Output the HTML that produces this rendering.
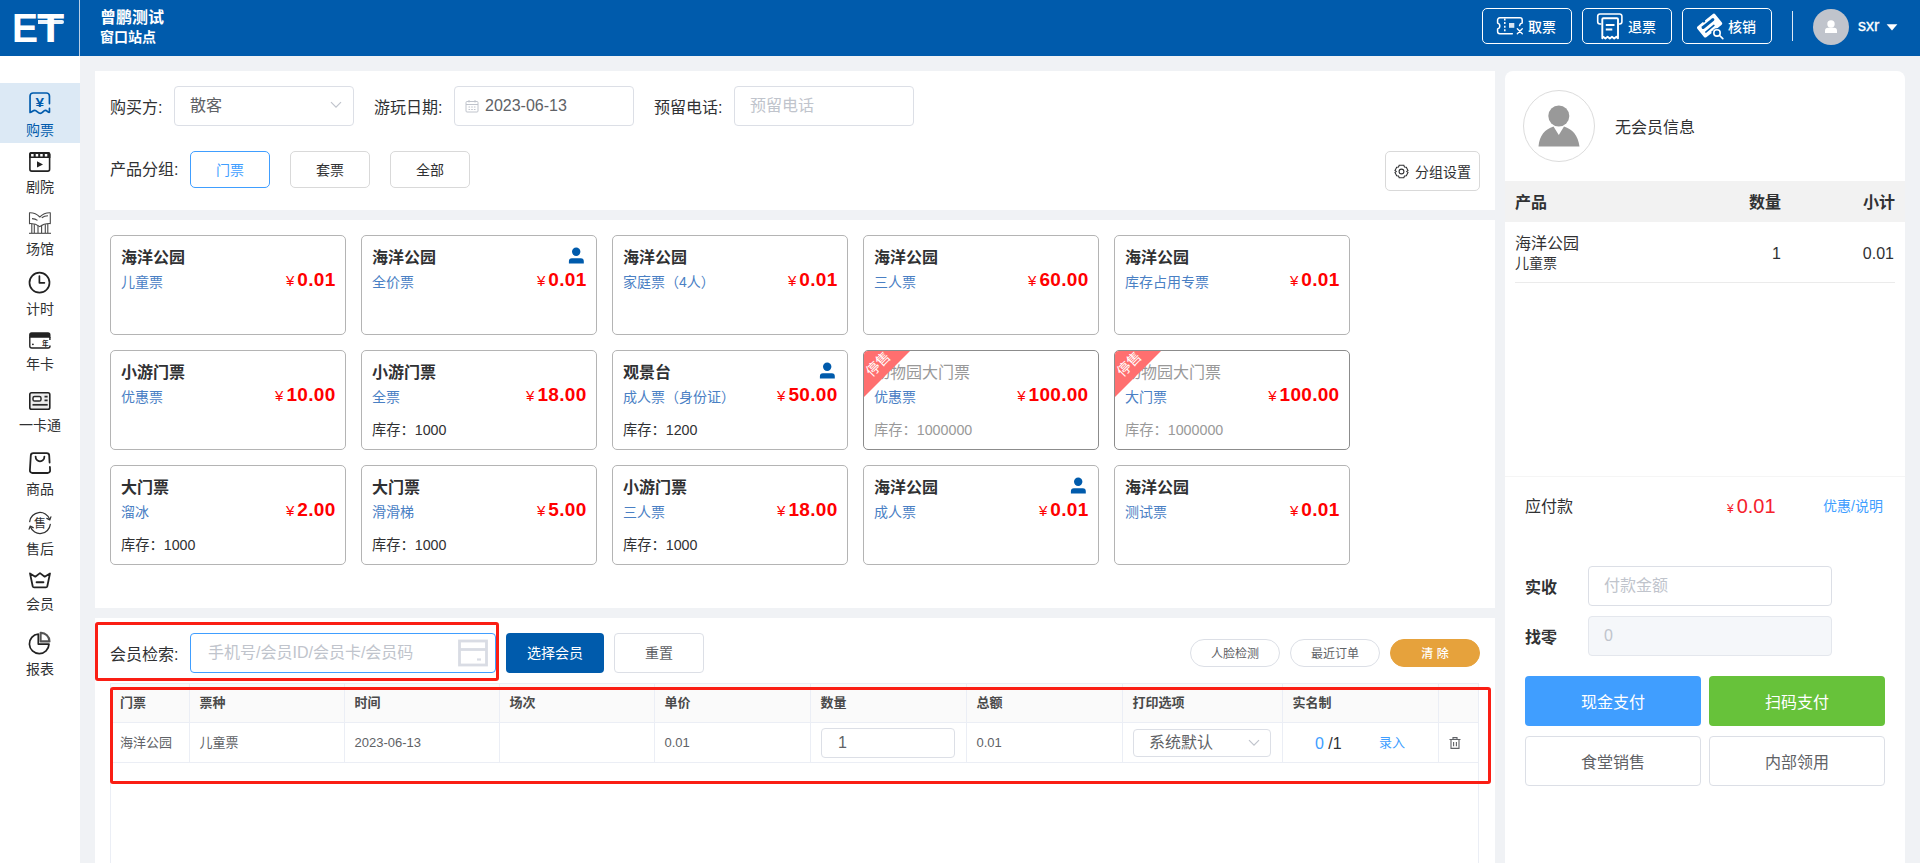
<!DOCTYPE html>
<html lang="zh-CN">
<head>
<meta charset="utf-8">
<title>购票</title>
<style>
*{box-sizing:border-box;margin:0;padding:0}
html,body{width:1920px;height:863px;overflow:hidden}
body{background:#f0f2f5;font-family:"Liberation Sans","Noto Sans CJK SC",sans-serif;color:#303133;position:relative;font-size:14px}
.abs{position:absolute}
.t{position:absolute;white-space:nowrap;line-height:20px}
/* header */
#hdr{position:absolute;left:0;top:0;width:1920px;height:56px;background:#005bac}
#hdr .vline{position:absolute;left:79px;top:0;width:1px;height:56px;background:#b9cfe6}
.hbtn{position:absolute;top:8px;width:90px;height:36px;border:1px solid #fff;border-radius:5px;color:#fff}
.hbtn span{position:absolute;left:45px;top:8px;font-size:14px;line-height:20px;font-weight:500}
/* sidebar */
#side{position:absolute;left:0;top:56px;width:80px;height:807px;background:#fff}
.sitem{position:absolute;left:0;width:80px;text-align:center;font-size:14px;line-height:18px;color:#303133}
/* panels */
.panel{position:absolute;background:#fff}
.inp{position:absolute;height:40px;border:1px solid #dcdfe6;border-radius:4px;background:#fff}
.gbtn{position:absolute;top:151px;width:80px;height:37px;border:1px solid #d9d9d9;border-radius:5px;background:#fff;text-align:center;font-size:14px;line-height:37px;color:#303133}
/* cards */
.card{position:absolute;width:236px;height:100px;border:1px solid #b4b4b4;border-radius:5px;background:#fff;overflow:hidden}
.card .n{position:absolute;left:10px;top:11px;font-size:16px;line-height:22px;font-weight:700;color:#303133;white-space:nowrap}
.card .s{position:absolute;left:10px;top:36px;font-size:14px;line-height:20px;color:#4a80c4;white-space:nowrap}
.card .p{position:absolute;right:9.500px;top:31px;line-height:26px;color:#ff0000;white-space:nowrap;font-size:19px;font-weight:700;letter-spacing:0.300px}
.card .p i{font-style:normal;font-weight:400;font-size:15px;margin-right:3px;letter-spacing:0}
.card .k{position:absolute;left:10px;top:69px;font-size:14.250px;line-height:20px;color:#303133;white-space:nowrap}
.card .u{position:absolute;right:11px;top:10px;width:18px;height:18px}
.card.off .n,.card.off .k{color:#999}.card.off .n{font-weight:400}
.card.off{border-color:#8c8c8c}
.tri{position:absolute;left:0;top:0;width:0;height:0;border-top:46px solid #ff6f6f;border-right:46px solid transparent}
.ts{position:absolute;left:-8px;top:5px;width:44px;text-align:center;font-size:14px;line-height:16px;color:#fff;transform:rotate(-45deg);white-space:nowrap}
.pill{top:639px;width:90px;height:28px;border:1px solid #dcdfe6;border-radius:14px;background:#fff;color:#606266;text-align:center;font-size:12px;line-height:28px}
.th{font-size:13px;line-height:20px;font-weight:700;color:#4a4a4a}
.td{font-size:13px;line-height:20px;color:#606266}
.pay{width:176px;height:50px;border-radius:4px;text-align:center;font-size:16px;line-height:54px}
</style>
</head>
<body>
<!-- HEADER -->
<div id="hdr">
  <div class="vline"></div>
  <div class="t" style="left:100px;top:7px;font-size:16px;line-height:22px;font-weight:700;color:#fff">曾鹏测试</div>
  <div class="t" style="left:100px;top:27px;font-size:14px;line-height:20px;font-weight:700;color:#fff">窗口站点</div>
  <div class="hbtn" style="left:1482px"><span>取票</span></div>
  <div class="hbtn" style="left:1582px"><span>退票</span></div>
  <div class="hbtn" style="left:1682px"><span>核销</span></div>
  <div class="abs" style="left:1792px;top:11px;width:1px;height:30px;background:#dfe9f4"></div>
  <div class="abs" style="left:1813px;top:9px;width:36px;height:36px;border-radius:50%;background:#c0c4cc"></div>
  <div class="t" style="left:1858px;top:15px;font-size:16px;line-height:22px;color:#fff;font-weight:400;-webkit-text-stroke:0.3px #fff">sxr</div>
</div>
<div class="t" style="left:12.100px;top:5px;font-size:39.800px;line-height:46px;font-weight:700;color:#fff;transform:scaleX(0.980);transform-origin:0 0">E</div>
<div class="t" style="left:37.400px;top:5px;font-size:39.800px;line-height:46px;font-weight:700;color:#fff;transform:scaleX(1.120);transform-origin:0 0">T</div>
<svg class="abs" style="left:1496px;top:16px" width="28" height="20" viewBox="0 0 28 20"><g fill="none" stroke="#fff" stroke-width="1.500" stroke-linecap="round" stroke-linejoin="round"><path d="M16.300 17.800H3.800a2.200 2.200 0 0 1-2.200-2.200V12.900a3 3 0 0 0 0-5.800V4a2.200 2.200 0 0 1 2.200-2.200H24a2.200 2.200 0 0 1 2.200 2.200V7.100a3 3 0 0 0-2.600 2.400"/><path d="M8.800 2.500V17.500" stroke-dasharray="2 1.600" stroke-linecap="butt"/><path d="M21.300 12.800L26.300 17.800M26.300 12.800L21.300 17.800" stroke-width="1.300"/></g><rect x="13" y="7" width="5.300" height="4.800" fill="#fff" opacity="0.850"/></svg>
<svg class="abs" style="left:1596px;top:12px" width="28" height="28" viewBox="0 0 28 28"><g fill="none" stroke="#fff" stroke-linejoin="round"><path d="M5.400 12H3.900a2.200 2.200 0 0 1-2.200-2.200V4.200a2.200 2.200 0 0 1 2.200-2.200H23.700a2.200 2.200 0 0 1 2.200 2.200V9.800a2.200 2.200 0 0 1-2.200 2.200H23" stroke-width="1.600"/><path d="M6.300 26.300V7.300a1 1 0 0 1 1-1H21a1 1 0 0 1 1 1V26.300l-1.600-1.500-2.200 1.700-2.200-1.700-2.200 1.700-2.200-1.700-2.200 1.700-2.200-1.700z" stroke-width="1.900"/><path d="M9.800 13H18.500M9.800 17.600H16.300" stroke-width="2"/></g></svg>
<svg class="abs" style="left:1697px;top:12px" width="28" height="28" viewBox="0 0 28 28"><g transform="translate(12.3 13.200) rotate(-39)"><path d="M-11.500 -4.500a2 2 0 0 1 2-2H-3a1.300 1.300 0 0 0 2.600 0H9.500a2 2 0 0 1 2 2V5.500a2 2 0 0 1-2 2H-0.400a1.300 1.300 0 0 0-2.600 0H-9.500a2 2 0 0 1-2-2z" fill="#fff"/><rect x="-7.800" y="-3.600" width="15.600" height="3" rx="1.500" fill="#005bac"/><rect x="-7.800" y="2.300" width="12" height="1.600" rx="0.800" fill="#005bac"/></g><circle cx="20" cy="20.900" r="4.900" fill="#005bac" opacity="0.750"/><circle cx="20" cy="20.900" r="3.200" fill="#005bac" stroke="#fff" stroke-width="1.600"/><path d="M22.600 23.500L25.800 26.600" stroke="#fff" stroke-width="1.700" stroke-linecap="round"/></svg>
<svg class="abs" style="left:1813px;top:9px" width="36" height="36" viewBox="0 0 36 36"><circle cx="18" cy="15" r="3.700" fill="#fff"/><path d="M12 24v-2.200a3 3 0 0 1 3-3h6a3 3 0 0 1 3 3V24z" fill="#fff"/></svg>
<svg class="abs" style="left:1886px;top:24px" width="12" height="7" viewBox="0 0 12 7"><path d="M0.600 0.200H11.400L6 6.600z" fill="#fff"/></svg>
<div class="abs" style="left:38.300px;top:19.600px;width:25.400px;height:4px;background:#fff;border-radius:0 2px 2px 0;opacity:.92"></div>
<!-- SIDEBAR -->
<div id="side"></div>
<!-- sidebar contents -->
<div class="abs" style="left:0;top:83px;width:80px;height:60px;background:#dce9f5"></div>
<div class="sitem" style="top:120.5px;color:#005bac">购票</div>
<div class="sitem" style="top:177.5px">剧院</div>
<div class="sitem" style="top:239.5px">场馆</div>
<div class="sitem" style="top:299.5px">计时</div>
<div class="sitem" style="top:355.0px">年卡</div>
<div class="sitem" style="top:415.5px">一卡通</div>
<div class="sitem" style="top:479.5px">商品</div>
<div class="sitem" style="top:539.5px">售后</div>
<div class="sitem" style="top:594.5px">会员</div>
<div class="sitem" style="top:659.5px">报表</div>
<svg class="abs" style="left:28px;top:91px;overflow:visible" width="24" height="25" viewBox="0 0 24 25"><g fill="none" stroke="#005bac" stroke-width="1.700" stroke-linecap="round" stroke-linejoin="round"><path d="M21.450 12.600V5a3 3 0 0 0-3-3H5.050a3 3 0 0 0-3 3V21.500C3.600 21.500 4.800 19.400 6.800 19.400S10.100 22.400 12.300 22.400S15.300 19.400 17.300 19.400S20.100 21.700 21.450 21.300V17.400"/></g><text x="11.900" y="15.800" font-family="Liberation Sans,sans-serif" font-size="13" font-weight="700" fill="#005bac" text-anchor="middle" transform="translate(11.900 0) scale(1.180 1) translate(-11.900 0)">¥</text></svg>
<svg class="abs" style="left:28px;top:151px" width="24" height="22" viewBox="0 0 24 22"><path d="M1.100 3.200a2.200 2.200 0 0 1 2.200-2.200H20.200a2.200 2.200 0 0 1 2.200 2.200V7H1.100z" fill="#222"/><rect x="1.900" y="1.800" width="19.700" height="18.300" rx="1.800" fill="none" stroke="#222" stroke-width="1.600"/><g fill="#fff"><rect x="3.100" y="3" width="2.500" height="2.500"/><rect x="7.700" y="3" width="2.500" height="2.500"/><rect x="12.200" y="3" width="2.500" height="2.500"/><rect x="16.800" y="3" width="2.500" height="2.500"/></g><path d="M9 10.300L15 13.400L9 16.500Z" fill="#222"/></svg>
<svg class="abs" style="left:28px;top:211px" width="24" height="24" viewBox="0 0 24 24"><g fill="none" stroke="#4a4a4a" stroke-width="1.100" stroke-linejoin="round"><path d="M1.500 1.800C5.500 1.600 8.800 3 11.800 6C14.800 3 18.200 1.600 22.300 1.800V12.600C18.500 12.400 15 13.200 11.800 15.600C8.600 13.200 5 12.400 1.500 12.600Z"/><path d="M1 22.300H23"/><path d="M3.800 12.800V22M6.300 13.200V22M10 14.600V22M13.600 14.600V22M17.300 13.200V22M19.800 12.800V22"/><path d="M4 7.600C6.200 7.600 8 8.200 9.500 9.400M13.800 6.800C15.500 5.500 17.500 4.800 20 4.800"/></g></svg>
<svg class="abs" style="left:28px;top:271px" width="24" height="24" viewBox="0 0 24 24"><g fill="none" stroke="#222" stroke-width="1.700" stroke-linecap="round" stroke-linejoin="round"><circle cx="11.500" cy="11.700" r="10"/><path d="M11.400 5V11.800H16.400"/></g></svg>
<svg class="abs" style="left:28px;top:331px" width="24" height="20" viewBox="0 0 24 20"><path d="M1.100 3.700a2.500 2.500 0 0 1 2.500-2.500H20a2.500 2.500 0 0 1 2.500 2.500V6.800H1.100z" fill="#222"/><path d="M1.800 6V15a2 2 0 0 0 2 2H20a2 2 0 0 0 2-2V14.600M21.900 9V6" fill="none" stroke="#222" stroke-width="1.400"/><circle cx="4.900" cy="13.300" r="0.900" fill="#222"/><text x="13.900" y="14.800" font-family="Noto Sans CJK SC,sans-serif" font-size="6.600" font-weight="700" fill="#222">年</text></svg>
<svg class="abs" style="left:28px;top:391px" width="24" height="20" viewBox="0 0 24 20"><rect x="1.800" y="1.800" width="20" height="16.500" rx="1.800" fill="#ececec" stroke="#222" stroke-width="1.600"/><rect x="5" y="5.400" width="8" height="4.600" rx="1.600" fill="#fff" stroke="#2a2a2a" stroke-width="1.500"/><path d="M16.500 5.700H19.600M16.500 9.300H19.600" stroke="#2a2a2a" stroke-width="1.700"/><path d="M4.500 13.800H19.700" stroke="#2a2a2a" stroke-width="1.700"/></svg>
<svg class="abs" style="left:28px;top:451px" width="24" height="24" viewBox="0 0 24 24"><g fill="none" stroke="#222" stroke-width="1.800" stroke-linecap="round" stroke-linejoin="round"><path d="M21.600 11.500L21.200 4.500a2.500 2.500 0 0 0-2.500-2.400H5.300a2.500 2.500 0 0 0-2.500 2.400L1.900 19.300a2.500 2.500 0 0 0 2.500 2.700H19.600a2.500 2.500 0 0 0 2.500-2.700L21.900 16"/><path d="M7.600 5.600a4.400 4.700 0 0 0 8.800 0"/></g></svg>
<svg class="abs" style="left:28px;top:511px" width="24" height="24" viewBox="0 0 24 24"><g fill="none" stroke="#333" stroke-width="1.250" stroke-linecap="round" stroke-linejoin="round"><path d="M1.700 10.600A10.300 10.300 0 0 1 21.600 8.200M22.300 13.400A10.300 10.300 0 0 1 2.400 15.800"/><path d="M18.800 7.400L21.800 8.900L22.900 5.900M5.200 16.600L2.200 15.100L1.100 18.100"/></g><text x="12" y="16.600" font-family="Noto Sans CJK SC,sans-serif" font-size="12" fill="#333" text-anchor="middle">售</text></svg>
<svg class="abs" style="left:28px;top:571px" width="24" height="19" viewBox="0 0 24 19"><g fill="none" stroke="#222" stroke-width="1.800" stroke-linecap="round" stroke-linejoin="round"><path d="M2 2.400L7.300 5.700L12 2.100L16.700 5.700L22 2.400L19.300 15.300a1.500 1.500 0 0 1-1.400 1.100H6.100a1.500 1.500 0 0 1-1.400-1.100Z"/><path d="M8.600 11.200H15.400" stroke-width="2"/></g></svg>
<svg class="abs" style="left:28px;top:631px" width="24" height="24" viewBox="0 0 24 24"><g fill="none" stroke-linejoin="round"><path d="M10.300 3A9.800 9.800 0 1 0 21 13.100H10.300Z" stroke="#222" stroke-width="1.700"/><path d="M12.600 1.900A8.500 8.500 0 0 1 21.500 10.400H12.600Z" stroke="#555" stroke-width="2.100"/></g></svg>
<!-- TOP FILTER PANEL -->
<div class="panel" id="p1" style="left:95px;top:71px;width:1400px;height:139px"></div>

<!-- filter contents -->
<div class="t" style="left:110px;top:97px;font-size:16px;line-height:22px">购买方:</div>
<div class="inp" style="left:174px;top:86px;width:180px"></div>
<div class="t" style="left:190px;top:95px;font-size:16px;line-height:22px;color:#606266">散客</div>
<svg class="abs" style="left:330px;top:101px" width="12" height="8" viewBox="0 0 12 8"><path d="M1 1.2 L6 6.2 L11 1.2" fill="none" stroke="#c0c4cc" stroke-width="1.2"/></svg>
<div class="t" style="left:374px;top:97px;font-size:16px;line-height:22px">游玩日期:</div>
<div class="inp" style="left:454px;top:86px;width:180px"></div>
<svg class="abs" style="left:465px;top:99px" width="14" height="14" viewBox="0 0 14 14"><g fill="none" stroke="#c0c4cc" stroke-width="1"><rect x="1" y="2.5" width="12" height="10.5" rx="1"/><path d="M1 5.5H13M4 1V3.5M10 1V3.5"/><path d="M3.5 8H10.5M3.5 10.5H10.5" stroke-dasharray="1.6 1.1"/></g></svg>
<div class="t" style="left:485px;top:95px;font-size:16px;line-height:22px;color:#606266">2023-06-13</div>
<div class="t" style="left:654px;top:97px;font-size:16px;line-height:22px">预留电话:</div>
<div class="inp" style="left:734px;top:86px;width:180px"></div>
<div class="t" style="left:750px;top:95px;font-size:16px;line-height:22px;color:#c0c4cc">预留电话</div>
<div class="t" style="left:110px;top:159px;font-size:16px;line-height:22px">产品分组:</div>
<div class="gbtn" style="left:190px;border-color:#409eff;color:#409eff">门票</div>
<div class="gbtn" style="left:290px">套票</div>
<div class="gbtn" style="left:390px">全部</div>
<div class="abs" style="left:1385px;top:151px;width:95px;height:40px;border:1px solid #d9d9d9;border-radius:5px;background:#fff"></div>
<svg class="abs" style="left:1394px;top:164px" width="15" height="15" viewBox="0 0 15 15"><g fill="none" stroke="#303133" stroke-width="1.1"><path d="M5.2 1.3h4.6l0.7 1.7 1.8 0.3 1.7 3.2-1.2 1 0 0 1.2 1-1.7 3.2-1.8 0.3-0.7 1.7H5.2l-0.7-1.7-1.8-0.3L1 8.5l1.2-1L1 6.5l1.7-3.2 1.8-0.3z"/><circle cx="7.5" cy="7.5" r="2.4"/></g></svg>
<div class="t" style="left:1415px;top:162px;font-size:14px;line-height:20px">分组设置</div>
<!-- PRODUCTS PANEL -->
<div class="panel" id="p2" style="left:95px;top:220px;width:1400px;height:388px"></div>
<!-- cards -->
<div class="card" style="left:110px;top:235px"><div class="n">海洋公园</div><div class="s">儿童票</div><div class="p"><i>¥</i>0.01</div></div>
<div class="card" style="left:361px;top:235px"><div class="n">海洋公园</div><div class="s">全价票</div><div class="p"><i>¥</i>0.01</div><svg class="u" viewBox="0 0 18 18"><circle cx="9.200" cy="5.700" r="4.200" fill="#005bac"/><path d="M1.900 17.500V15.200a3 3 0 0 1 3-3H13.800a3 3 0 0 1 3 3V17.500z" fill="#005bac"/></svg></div>
<div class="card" style="left:612px;top:235px"><div class="n">海洋公园</div><div class="s">家庭票（4人）</div><div class="p"><i>¥</i>0.01</div></div>
<div class="card" style="left:863px;top:235px"><div class="n">海洋公园</div><div class="s">三人票</div><div class="p"><i>¥</i>60.00</div></div>
<div class="card" style="left:1114px;top:235px"><div class="n">海洋公园</div><div class="s">库存占用专票</div><div class="p"><i>¥</i>0.01</div></div>
<div class="card" style="left:110px;top:350px"><div class="n">小游门票</div><div class="s">优惠票</div><div class="p"><i>¥</i>10.00</div></div>
<div class="card" style="left:361px;top:350px"><div class="n">小游门票</div><div class="s">全票</div><div class="p"><i>¥</i>18.00</div><div class="k">库存：1000</div></div>
<div class="card" style="left:612px;top:350px"><div class="n">观景台</div><div class="s">成人票（身份证）</div><div class="p"><i>¥</i>50.00</div><svg class="u" viewBox="0 0 18 18"><circle cx="9.200" cy="5.700" r="4.200" fill="#005bac"/><path d="M1.900 17.500V15.200a3 3 0 0 1 3-3H13.800a3 3 0 0 1 3 3V17.500z" fill="#005bac"/></svg><div class="k">库存：1200</div></div>
<div class="card off" style="left:863px;top:350px"><div class="n">动物园大门票</div><div class="s">优惠票</div><div class="p"><i>¥</i>100.00</div><div class="k">库存：1000000</div><div class="tri"></div><div class="ts">停售</div></div>
<div class="card off" style="left:1114px;top:350px"><div class="n">动物园大门票</div><div class="s">大门票</div><div class="p"><i>¥</i>100.00</div><div class="k">库存：1000000</div><div class="tri"></div><div class="ts">停售</div></div>
<div class="card" style="left:110px;top:465px"><div class="n">大门票</div><div class="s">溜冰</div><div class="p"><i>¥</i>2.00</div><div class="k">库存：1000</div></div>
<div class="card" style="left:361px;top:465px"><div class="n">大门票</div><div class="s">滑滑梯</div><div class="p"><i>¥</i>5.00</div><div class="k">库存：1000</div></div>
<div class="card" style="left:612px;top:465px"><div class="n">小游门票</div><div class="s">三人票</div><div class="p"><i>¥</i>18.00</div><div class="k">库存：1000</div></div>
<div class="card" style="left:863px;top:465px"><div class="n">海洋公园</div><div class="s">成人票</div><div class="p"><i>¥</i>0.01</div><svg class="u" viewBox="0 0 18 18"><circle cx="9.200" cy="5.700" r="4.200" fill="#005bac"/><path d="M1.900 17.500V15.200a3 3 0 0 1 3-3H13.800a3 3 0 0 1 3 3V17.500z" fill="#005bac"/></svg></div>
<div class="card" style="left:1114px;top:465px"><div class="n">海洋公园</div><div class="s">测试票</div><div class="p"><i>¥</i>0.01</div></div>
<!-- BOTTOM PANEL -->
<div class="panel" id="p3" style="left:95px;top:618px;width:1400px;height:245px"></div>
<!-- bottom contents -->
<div class="t" style="left:110px;top:644px;font-size:16px;line-height:22px">会员检索:</div>
<div class="inp" style="left:190px;top:633px;width:306px;border-color:#409eff"></div>
<div class="t" style="left:208px;top:642px;font-size:16px;line-height:22px;color:#c0c4cc">手机号/会员ID/会员卡/会员码</div>
<svg class="abs" style="left:458px;top:639px" width="30" height="28" viewBox="0 0 30 28"><g fill="none" stroke="#d9dce4" stroke-width="2.800"><rect x="1.5" y="2" width="27" height="24"/><path d="M1.5 10.5H28.5"/><path d="M19 20.5H23" stroke-width="2.2"/></g></svg>
<div class="abs" style="left:506px;top:633px;width:98px;height:40px;border-radius:4px;background:#005bac;color:#fff;text-align:center;font-size:14px;line-height:40px">选择会员</div>
<div class="abs" style="left:614px;top:633px;width:90px;height:40px;border-radius:4px;background:#fff;border:1px solid #dcdfe6;color:#606266;text-align:center;font-size:14px;line-height:38px">重置</div>
<div class="abs pill" style="left:1190px">人脸检测</div>
<div class="abs pill" style="left:1290px">最近订单</div>
<div class="abs pill" style="left:1390px;background:#e6a23c;border-color:#e6a23c;color:#fff;font-weight:500">清 除</div>
<div class="abs" style="left:110px;top:683px;width:1369px;height:180px;border:1px solid #ebeef5;border-bottom:0"></div>
<div class="abs" style="left:111px;top:684px;width:1367px;height:39px;background:#fafafa;border-bottom:1px solid #ebeef5"></div>
<div class="abs" style="left:111px;top:762px;width:1367px;height:1px;background:#ebeef5"></div>
<div class="abs" style="left:189px;top:684px;width:1px;height:78px;background:#ebeef5"></div>
<div class="abs" style="left:344px;top:684px;width:1px;height:78px;background:#ebeef5"></div>
<div class="abs" style="left:499px;top:684px;width:1px;height:78px;background:#ebeef5"></div>
<div class="abs" style="left:654px;top:684px;width:1px;height:78px;background:#ebeef5"></div>
<div class="abs" style="left:810px;top:684px;width:1px;height:78px;background:#ebeef5"></div>
<div class="abs" style="left:966px;top:684px;width:1px;height:78px;background:#ebeef5"></div>
<div class="abs" style="left:1122px;top:684px;width:1px;height:78px;background:#ebeef5"></div>
<div class="abs" style="left:1282px;top:684px;width:1px;height:78px;background:#ebeef5"></div>
<div class="abs" style="left:1438px;top:684px;width:1px;height:78px;background:#ebeef5"></div>
<div class="t th" style="left:120px;top:693px">门票</div>
<div class="t th" style="left:199.5px;top:693px">票种</div>
<div class="t th" style="left:354.5px;top:693px">时间</div>
<div class="t th" style="left:509.5px;top:693px">场次</div>
<div class="t th" style="left:664.5px;top:693px">单价</div>
<div class="t th" style="left:820.5px;top:693px">数量</div>
<div class="t th" style="left:976.5px;top:693px">总额</div>
<div class="t th" style="left:1132.5px;top:693px">打印选项</div>
<div class="t th" style="left:1292.5px;top:693px">实名制</div>
<div class="t td" style="left:120px;top:733px">海洋公园</div>
<div class="t td" style="left:354.5px;top:733px">2023-06-13</div>
<div class="t td" style="left:664.5px;top:733px">0.01</div>
<div class="t td" style="left:976.5px;top:733px">0.01</div>
<div class="t" style="left:199.500px;top:733px;font-size:13px;line-height:20px;color:#606266">儿童票</div>
<div class="abs" style="left:821px;top:728px;width:134px;height:30px;border:1px solid #dcdfe6;border-radius:4px;background:#fff"></div>
<div class="t" style="left:838px;top:732px;font-size:16px;line-height:22px;color:#606266">1</div>
<div class="abs" style="left:1133px;top:729px;width:138px;height:28px;border:1px solid #dcdfe6;border-radius:4px;background:#fff"></div>
<div class="t" style="left:1149px;top:732px;font-size:16px;line-height:22px;color:#606266">系统默认</div>
<svg class="abs" style="left:1248px;top:739px" width="12" height="8" viewBox="0 0 12 8"><path d="M1 1.2 L6 6.2 L11 1.2" fill="none" stroke="#c0c4cc" stroke-width="1.2"/></svg>
<div class="t" style="left:1315px;top:733px;font-size:16px;line-height:22px;color:#303133"><span style="color:#409eff">0</span> /1</div>
<div class="t" style="left:1379px;top:733px;font-size:13px;line-height:20px;color:#409eff">录入</div>
<svg class="abs" style="left:1448px;top:736px" width="14" height="14" viewBox="0 0 14 14"><g fill="none" stroke="#606266" stroke-width="1.1"><path d="M1.5 3.5H12.5M5 3.5V1.6H9V3.5M3 3.5V12.4H11V3.5M5.6 6V10.2M8.4 6V10.2"/></g></svg>
<div class="abs" style="left:95px;top:622px;width:404px;height:59px;border:3px solid #fa1e14;border-radius:3px"></div>
<div class="abs" style="left:110px;top:687px;width:1381px;height:97px;border:3px solid #fa1e14;border-radius:3px"></div>
<!-- RIGHT PANEL -->
<div class="panel" id="p4" style="left:1505px;top:71px;width:400px;height:792px;border-radius:8px 8px 0 0"></div>
<!-- right contents -->
<div class="abs" style="left:1523px;top:90px;width:72px;height:72px;border-radius:50%;border:1px solid #dcdcdc;background:#fff"></div>
<svg class="abs" style="left:1536px;top:104px" width="46" height="44" viewBox="0 0 46 44"><circle cx="22.8" cy="12" r="10.5" fill="#999"/><path d="M2.5 42.5C3.500 31 9 25.500 17.500 22.500L22.800 31L28 22.500C36.500 25.500 42 31 43.500 42.500Z" fill="#999"/></svg>
<div class="t" style="left:1615px;top:117px;font-size:16px;line-height:22px">无会员信息</div>
<div class="abs" style="left:1505px;top:181px;width:400px;height:41px;background:#f2f2f2"></div>
<div class="t" style="left:1515px;top:192px;font-size:16px;line-height:22px;font-weight:700">产品</div>
<div class="t" style="right:139px;top:192px;font-size:16px;line-height:22px;font-weight:700">数量</div>
<div class="t" style="right:25px;top:192px;font-size:16px;line-height:22px;font-weight:700">小计</div>
<div class="t" style="left:1515px;top:233px;font-size:16px;line-height:22px">海洋公园</div>
<div class="t" style="left:1515px;top:253px;font-size:14px;line-height:20px">儿童票</div>
<div class="t" style="left:1772px;top:243px;font-size:16px;line-height:22px">1</div>
<div class="t" style="right:26px;top:243px;font-size:16px;line-height:22px">0.01</div>
<div class="abs" style="left:1515px;top:282px;width:380px;height:1px;background:#ebebeb"></div>
<div class="abs" style="left:1505px;top:476px;width:400px;height:1px;background:#f5f5f5"></div>
<div class="t" style="left:1525px;top:496px;font-size:16px;line-height:22px">应付款</div>
<div class="t" style="left:1727px;top:492px;font-size:20px;line-height:28px;color:#f5222d"><span style="font-size:12px;margin-right:3px">¥</span>0.01</div>
<div class="t" style="left:1823px;top:496px;font-size:14px;line-height:20px;color:#409eff">优惠/说明</div>
<div class="t" style="left:1525px;top:577px;font-size:16px;line-height:22px;font-weight:700">实收</div>
<div class="inp" style="left:1588px;top:566px;width:244px"></div>
<div class="t" style="left:1604px;top:575px;font-size:16px;line-height:22px;color:#c0c4cc">付款金额</div>
<div class="t" style="left:1525px;top:627px;font-size:16px;line-height:22px;font-weight:700">找零</div>
<div class="inp" style="left:1588px;top:616px;width:244px;background:#f5f7fa;border-color:#e4e7ed"></div>
<div class="t" style="left:1604px;top:625px;font-size:16px;line-height:22px;color:#c0c4cc">0</div>
<div class="abs pay" style="left:1525px;top:676px;background:#409eff;color:#fff">现金支付</div>
<div class="abs pay" style="left:1709px;top:676px;background:#67c23a;color:#fff">扫码支付</div>
<div class="abs pay" style="left:1525px;top:736px;background:#fff;color:#606266;border:1px solid #dcdfe6;line-height:52px">食堂销售</div>
<div class="abs pay" style="left:1709px;top:736px;background:#fff;color:#606266;border:1px solid #dcdfe6;line-height:52px">内部领用</div>
</body>
</html>
